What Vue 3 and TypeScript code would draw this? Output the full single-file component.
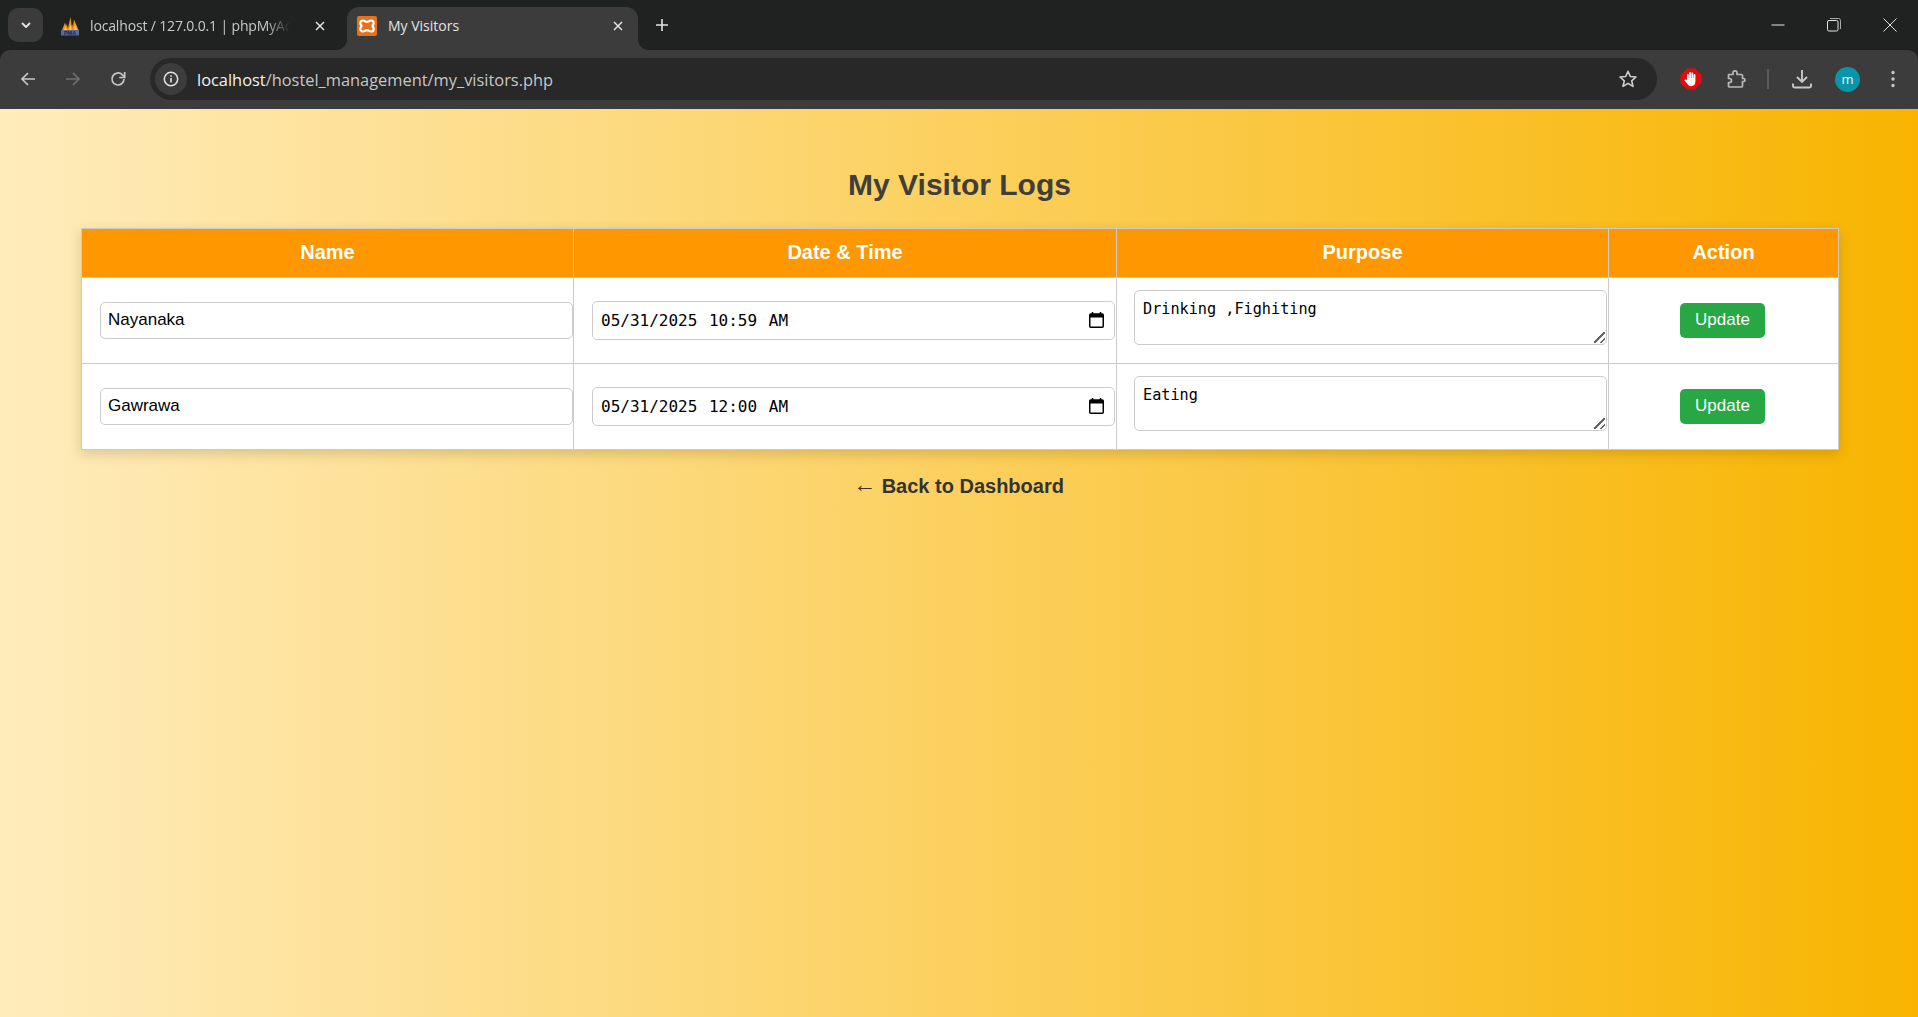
<script setup lang="ts">
interface Visitor { name: string; when: string; purpose: string }
const visitors: Visitor[] = [
  { name: 'Nayanaka', when: '05/31/2025 10:59 AM', purpose: 'Drinking ,Fighiting' },
  { name: 'Gawrawa', when: '05/31/2025 12:00 AM', purpose: 'Eating' },
]
</script>

<template>
  <div class="window">
    <header class="chrome">
      <div class="strip">
        <button class="tab-search" aria-label="Tab search">
          <svg width="12" height="12" viewBox="0 0 12 12"><path d="M2.5 4.5 6 8l3.5-3.5" fill="none" stroke="#e3e3e3" stroke-width="1.8" stroke-linecap="round" stroke-linejoin="round"/></svg>
        </button>
        <div class="tab first-tab">
          <svg class="favicon" width="20" height="20" viewBox="0 0 20 20">
            <path d="M2 14 5 6.500 6 10 7 8l1 6ZM7.500 14 10.500 1l1.200 9 .8-2 .5 6ZM12.500 14 14 3.500 18.500 14Z" fill="#f29111"/>
            <path d="M4 14l1.500-4L7 14ZM9 14l1.500-6 1 6ZM14 14l1-6 2 6Z" fill="#ffc36b"/>
            <rect x="1" y="14" width="18" height="5.500" fill="#5a6a9e"/>
            <text x="10" y="19" text-anchor="middle" class="pma">PMA</text>
          </svg>
          <span class="tab-title fade">localhost / 127.0.0.1 | phpMyAd</span>
          <svg class="tab-x" width="12" height="12" viewBox="0 0 12 12"><path d="m2 2 8 8M10 2l-8 8" stroke="#e3e3e3" stroke-width="1.5"/></svg>
        </div>
        <div class="tab active">
          <svg class="favicon" width="20" height="20" viewBox="0 0 20 20">
            <rect width="20" height="20" rx="2" fill="#e8711c"/>
            <path d="M6 4.5c1.7 0 2.400 1.300 4 1.300s2.300-1.300 4-1.300c1.800 0 2.700 1.500 2.700 2.800 0 1.400-1.200 1.900-1.200 2.700s1.200 1.300 1.200 2.700c0 1.300-.9 2.800-2.700 2.800-1.700 0-2.400-1.300-4-1.300s-2.300 1.300-4 1.300c-1.800 0-2.700-1.500-2.700-2.800 0-1.400 1.200-1.900 1.200-2.700S3.300 8.700 3.300 7.300C3.300 6 4.200 4.500 6 4.500Z" fill="none" stroke="#fff" stroke-width="2.200"/>
          </svg>
          <span class="tab-title">My Visitors</span>
          <svg class="tab-x" width="12" height="12" viewBox="0 0 12 12"><path d="m2 2 8 8M10 2l-8 8" stroke="#e3e3e3" stroke-width="1.500"/></svg>
        </div>
        <svg class="new-tab" width="14" height="14" viewBox="0 0 14 14"><path d="M7 1v12M1 7h12" stroke="#e3e3e3" stroke-width="1.600"/></svg>
        <div class="win-controls">
          <svg width="14" height="14" viewBox="0 0 14 14"><path d="M.5 7h13" stroke="#e3e3e3"/></svg>
          <svg width="14" height="14" viewBox="0 0 14 14"><rect x=".5" y="2.500" width="10.500" height="10.500" rx="1.500" fill="none" stroke="#e3e3e3"/><path d="M3 .5h8.500a2 2 0 0 1 2 2V11" fill="none" stroke="#a8a8a8"/></svg>
          <svg width="14" height="14" viewBox="0 0 14 14"><path d="m.5.5 13 13M13.500.5l-13 13" stroke="#e3e3e3"/></svg>
        </div>
      </div>
      <div class="toolbar">
        <svg class="nav first" width="18" height="18" viewBox="0 0 18 18"><path d="M16 9H3M9 3 3 9l6 6" fill="none" stroke="#c7c7c7" stroke-width="1.700"/></svg>
        <svg class="nav" width="18" height="18" viewBox="0 0 18 18"><path d="M2 9h13M9 3l6 6-6 6" fill="none" stroke="#6f6f6f" stroke-width="1.700"/></svg>
        <svg class="nav" width="18" height="18" viewBox="0 0 18 18"><path d="M15 9a6 6 0 1 1-1.800-4.300L15 6.500" fill="none" stroke="#c7c7c7" stroke-width="1.700"/><path d="M15.700 2v5.500h-5.500" fill="none" stroke="#c7c7c7" stroke-width="1.700"/></svg>
        <div class="omnibox">
          <span class="info">
            <svg width="18" height="18" viewBox="0 0 18 18"><circle cx="9" cy="9" r="6.700" fill="none" stroke="#e3e3e3" stroke-width="1.500"/><path d="M9 8v4.500M9 5.200v1.500" stroke="#e3e3e3" stroke-width="1.600"/></svg>
          </span>
          <span class="url"><span class="host">localhost</span>/hostel_management/my_visitors.php</span>
          <svg class="star" width="20" height="20" viewBox="0 0 20 20"><path d="m10 2.300 2.300 5.200 5.700.5-4.300 3.800 1.300 5.600-5-3-5 3 1.300-5.600L2 8l5.700-.5Z" fill="none" stroke="#d0d0d0" stroke-width="1.600" stroke-linejoin="round"/></svg>
        </div>
        <div class="actions">
          <svg width="22" height="22" viewBox="0 0 22 22">
            <path d="M7 .5h8L21.500 7v8L15 21.500H7L.5 15V7Z" fill="#e40b0b"/>
            <path d="M7 12V6.800a.9.9 0 0 1 1.800 0V10h.4V4.800a.9.9 0 0 1 1.800 0V10h.4V5.300a.9.9 0 0 1 1.800 0V10h.4V7a.9.9 0 0 1 1.800 0v6.500c0 2.800-1.700 4.700-4.300 4.700-2 0-3-1-3.800-2.500L4.600 12.800c-.5-.9.700-1.700 1.400-1Z" fill="#fff"/>
          </svg>
          <svg width="20" height="20" viewBox="0 0 20 20"><path d="M2.500 5.500H7V3.800a2 2 0 0 1 4 0v1.700h4.500a1 1 0 0 1 1 1v3h1a1.500 1.500 0 0 1 0 3h-1v4.500a1 1 0 0 1-1 1h-12a1 1 0 0 1-1-1V13.500h1a2 2 0 0 0 0-4h-1V6.500a1 1 0 0 1 1-1Z" fill="none" stroke="#b9b9b9" stroke-width="1.700" stroke-linejoin="round"/></svg>
          <span class="divider"></span>
          <svg width="20" height="20" viewBox="0 0 20 20"><path d="M10 1v11M5 8l5 5 5-5" fill="none" stroke="#c7c7c7" stroke-width="1.900"/><path d="M1 14.500V17a1.500 1.500 0 0 0 1.500 1.500h15A1.500 1.500 0 0 0 19 17v-2.500" fill="none" stroke="#c7c7c7" stroke-width="1.900"/></svg>
          <span class="avatar">m</span>
          <svg width="6" height="18" viewBox="0 0 6 18"><circle cx="3" cy="2.500" r="1.700" fill="#c7c7c7"/><circle cx="3" cy="9" r="1.700" fill="#c7c7c7"/><circle cx="3" cy="15.500" r="1.700" fill="#c7c7c7"/></svg>
        </div>
      </div>
    </header>

    <main class="page">
      <h2 class="title">My Visitor Logs</h2>
      <table class="logs">
        <colgroup>
          <col class="c-name" /><col class="c-date" /><col class="c-purpose" /><col class="c-action" />
        </colgroup>
        <thead>
          <tr><th>Name</th><th>Date &amp; Time</th><th>Purpose</th><th>Action</th></tr>
        </thead>
        <tbody>
          <tr v-for="v in visitors" :key="v.name">
            <td><input class="field name" type="text" :value="v.name" /></td>
            <td>
              <span class="date-wrap">
                <input class="field date" type="text" :value="v.when" />
                <svg class="cal" width="15" height="16" viewBox="0 0 15 16">
                  <path d="M3.500 0v3M11.500 0v3" stroke="#000" stroke-width="1.500"/>
                  <rect x=".75" y="2" width="13.500" height="13.250" rx="1" fill="#fff" stroke="#000" stroke-width="1.500"/>
                  <rect x=".75" y="2" width="13.500" height="3.500" fill="#000"/>
                </svg>
              </span>
            </td>
            <td><textarea class="field purpose" :value="v.purpose"></textarea></td>
            <td class="action"><button class="update">Update</button></td>
          </tr>
        </tbody>
      </table>
      <a class="back" href="#"><span class="arrow">←</span> Back to Dashboard</a>
    </main>
  </div>
</template>

<style>
html, body { margin: 0; height: 100%; }
</style>

<style scoped>
.window { width: 1918px; height: 1017px; display: flex; flex-direction: column; overflow: hidden; font-family: "Liberation Sans", Arial, sans-serif; }

.chrome { flex: none; background: #202221; font-family: "Open Sans", "Noto Sans", sans-serif; }
.strip { height: 50px; display: flex; align-items: flex-start; }
.tab-search { width: 35px; height: 34px; margin: 8px 0 0 8px; border: 0; border-radius: 10px; background: #3b3b3b; display: flex; align-items: center; justify-content: center; padding: 0; }
.tab { height: 43px; margin-top: 7px; display: flex; align-items: center; box-sizing: border-box; position: relative; padding-bottom: 6px; }
.first-tab { width: 297px; margin-left: 5px; padding: 0 19px 6px 12px; gap: 10px; }
.first-tab .tab-title { margin-right: 14px; letter-spacing: -.15px; }
.tab.active { width: 291px; margin-left: 2px; padding: 0 14px 6px 10px; gap: 11px; background: #3c3c3c; border-radius: 12px 12px 0 0; }
.tab.active::before, .tab.active::after { content: ""; position: absolute; bottom: 0; width: 10px; height: 10px; background: radial-gradient(circle at 100% 0, #202221 9.500px, #3c3c3c 10px); }
.tab.active::before { left: -10px; transform: scaleX(-1); }
.tab.active::after { right: -10px; }
.favicon { flex: none; }
.pma { font: bold 5.500px "Liberation Sans", sans-serif; fill: #20284a; }
.tab-title { flex: 1; min-width: 0; font-size: 14px; color: #c9c9c9; white-space: nowrap; }
.tab.active .tab-title { color: #e3e3e3; }
.fade { -webkit-mask-image: linear-gradient(to right, #000 88%, transparent); mask-image: linear-gradient(to right, #000 88%, transparent); }
.tab-x { flex: none; }
.new-tab { margin: 18px 0 0 17px; }
.win-controls { margin: 18px 0 0 auto; display: flex; gap: 42px; padding-right: 21px; }

.toolbar { height: 59px; padding-bottom: 1px; background: #3c3c3c; border-radius: 10px 10px 0 0; display: flex; align-items: center; box-sizing: border-box; }
.nav { flex: none; margin-right: 27px; }
.nav.first { margin-left: 19px; }
.omnibox { width: 1507px; height: 42px; margin-left: -4px; border-radius: 21px; background: #282828; display: flex; align-items: center; padding: 0 5px; box-sizing: border-box; }
.info { flex: none; width: 32px; height: 32px; border-radius: 50%; background: #3c3c3c; display: flex; align-items: center; justify-content: center; }
.url { margin-left: 10px; flex: 1; font-size: 16.400px; color: #c7c7c7; white-space: nowrap; }
.host { color: #f1f1f1; }
.star { margin-right: 14px; }
.actions { flex: 1; display: flex; align-items: center; padding-left: 23px; }
.actions > :nth-child(2) { margin-left: 24px; }
.divider { width: 2px; height: 20px; background: #5c5c5c; margin-left: 21px; }
.actions > :nth-child(4) { margin-left: 23px; }
.avatar { width: 25px; height: 25px; margin-left: 23px; border-radius: 50%; background: #0a96a8; color: #e9f8fa; font-size: 13px; display: flex; align-items: center; justify-content: center; line-height: 1; }
.actions > :last-child { margin-left: 30px; }

.page { flex: 1; padding: 0 0 0 81px; background: linear-gradient(to right, #ffecbc, #f8b400); }
.title { margin: 0; padding-top: 58px; height: 61px; box-sizing: content-box; font-size: 30px; line-height: 36px; font-weight: 700; text-align: center; color: #3e3e3e; width: 1757px; }
.logs { width: 1757px; table-layout: fixed; border-collapse: collapse; background: #fff; box-shadow: 0 4px 12px rgba(0, 0, 0, .15); }
.c-name { width: 492px; } .c-date { width: 543px; } .c-purpose { width: 492px; } .c-action { width: 230px; }
.logs th, .logs td { border: 1px solid #ccc; padding: 0; text-align: center; }
.logs th { height: 49px; box-sizing: border-box; padding-bottom: 2px; background: #ff9800; color: #fff; font-size: 20px; font-weight: 700; }
.logs td { height: 85px; }
.logs td:not(.action) { text-align: right; }
.logs td:nth-child(2), .logs td:nth-child(3) { padding-right: 1px; }
.field { box-sizing: border-box; border: 1px solid #ccc; border-radius: 5px; background: #fff; color: #000; margin: 0; vertical-align: middle; outline: none; }
.name { width: 473px; height: 37px; padding: 0 7px 1px; font: 17px "Liberation Sans", Arial, sans-serif; }
.date-wrap { display: inline-block; position: relative; vertical-align: middle; }
.date { display: block; width: 523px; height: 39px; padding: 0 8px; font: 16px "DejaVu Sans Mono", monospace; word-spacing: 2px; }
.cal { position: absolute; right: 11px; top: 11px; }
.purpose { display: block; width: 473px; height: 55px; margin: 0 0 6px auto; padding: 8px 8px 6px; font: 15.200px/20px "DejaVu Sans Mono", monospace; }
.purpose::-webkit-resizer { background: linear-gradient(135deg, transparent 45%, #666 45%, #666 55%, transparent 55%, transparent 75%, #666 75%, #666 85%, transparent 85%) no-repeat right 1px bottom 1px / 11px 11px; }
.update { width: 85px; height: 35px; margin-right: 2px; border: 0; border-radius: 5px; background: #28a745; color: #fff; font: 17px "Liberation Sans", Arial, sans-serif; padding: 0 0 2px; }
.back { display: block; width: 1755px; margin-top: 25px; text-align: center; font-size: 20px; line-height: 23px; font-weight: 700; color: #333; text-decoration: none; }
.arrow { font-weight: 400; font-size: 23px; line-height: 0; vertical-align: 1px; }
</style>
